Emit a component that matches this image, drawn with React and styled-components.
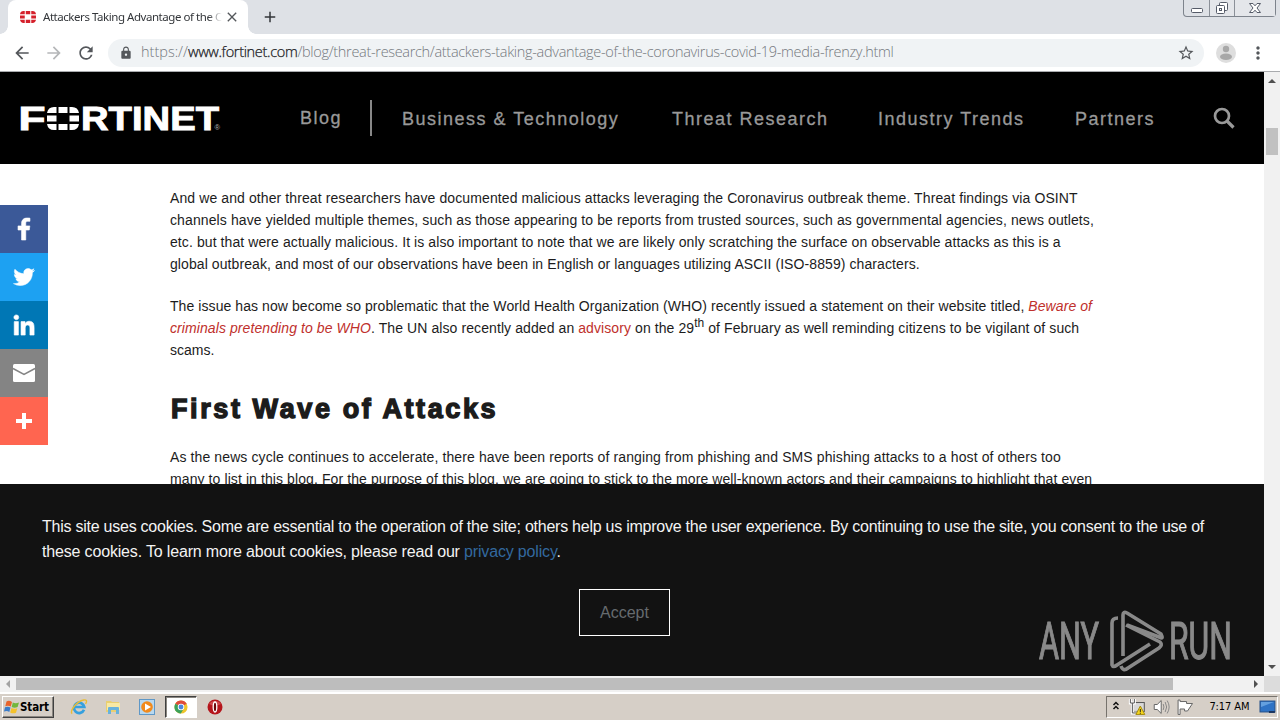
import styled, { createGlobalStyle } from "styled-components";
import { MdArrowBack, MdArrowForward, MdRefresh, MdClose, MdAdd, MdLock, MdStarBorder, MdMoreVert } from "react-icons/md";

const sans = `"Liberation Sans", Arial, sans-serif`;
const ui = `"DejaVu Sans Condensed", "DejaVu Sans", sans-serif`;

const GlobalStyle = createGlobalStyle`
  * { box-sizing: border-box; }
  body { margin: 0; overflow: hidden; background: #fff; }
`;

const Screen = styled.div`
  width: 1280px;
  height: 720px;
  display: flex;
  flex-direction: column;
  overflow: hidden;
  font-family: ${sans};
`;

const TabStrip = styled.div`
  height: 34px;
  flex: none;
  display: flex;
  align-items: flex-start;
  background: #dee1e6;
`;

const Tab = styled.div`
  position: relative;
  width: 240px;
  height: 34px;
  margin-left: 8px;
  padding: 0 8px 0 12px;
  display: flex;
  align-items: center;
  border-radius: 8px 8px 0 0;
  background: #fff;

  &::before, &::after {
    content: "";
    position: absolute;
    bottom: 0;
    width: 8px;
    height: 8px;
  }
  &::before {
    left: -8px;
    background: radial-gradient(circle at 0 0, #dee1e6 7.5px, #fff 8px);
  }
  &::after {
    right: -8px;
    background: radial-gradient(circle at 100% 0, #dee1e6 7.5px, #fff 8px);
  }
`;

const TabTitle = styled.div`
  width: 181px;
  margin-left: 7px;
  overflow: hidden;
  white-space: nowrap;
  font: 11.5px/16px "Noto Sans", sans-serif;
  letter-spacing: -0.45px;
  color: #33363a;
  mask-image: linear-gradient(90deg, #000 165px, transparent 179px);
`;

const NewTab = styled.div`
  margin: 8px 0 0 13px;
  height: 18px;
  color: #33363a;
`;

const WindowButtons = styled.div`
  display: flex;
  width: 93px;
  height: 17px;
  margin: 0 4px 0 auto;
  border: 1px solid #7d838c;
  border-top: 0;
  border-radius: 0 0 4px 4px;
`;

const WindowButton = styled.div`
  width: ${({ $width }) => $width}px;
  border-left: ${({ $first }) => ($first ? "0" : "1px solid #8b9098")};
  background: ${({ $first }) => ($first ? "transparent" : "#e4e6ea")};
  display: flex;
  justify-content: center;
`;

const Toolbar = styled.div`
  height: 38px;
  flex: none;
  display: flex;
  align-items: center;
  padding-left: 12px;
  background: #fff;
  border-bottom: 1px solid #a9abae;
  color: #54575b;
`;

const NavIcon = styled.div`
  width: 20px;
  height: 20px;
  margin-right: 12px;
  color: ${({ $muted }) => ($muted ? "#b5b7b9" : "#54575b")};
`;

const AddressBar = styled.div`
  width: 1096px;
  height: 28px;
  padding: 0 9px 0 11px;
  display: flex;
  align-items: center;
  border-radius: 14px;
  background: #f0f3f5;
`;

const Url = styled.div`
  flex: 1;
  margin-left: 8px;
  padding-bottom: 2px;
  white-space: nowrap;
  font: 300 14.5px/20px "Open Sans", "Noto Sans", sans-serif;
  letter-spacing: -0.32px;
  color: #74787d;

  b {
    font-weight: 300;
    color: #202124;
    -webkit-text-stroke: 0.25px #202124;
  }
`;

const Scheme = styled.span`
  letter-spacing: 0;
`;

const Avatar = styled.div`
  margin-left: 12px;
  height: 20px;
`;

const MenuButton = styled.div`
  margin-left: 12px;
  height: 20px;
`;

const Viewport = styled.div`
  flex: none;
  height: 604px;
  display: grid;
  grid-template-columns: 1264px 16px;
`;

const Page = styled.main`
  position: relative;
  height: 604px;
  overflow: hidden;
  background: #fff;
`;

const SiteHeader = styled.header`
  height: 92px;
  padding-left: 17px;
  display: flex;
  align-items: center;
  background: #000;
`;

const SiteNav = styled.nav`
  display: flex;
  align-items: center;
  margin-left: 75px;
  color: #999;
`;

const NavLink = styled.a`
  width: ${({ $width }) => $width}px;
  white-space: nowrap;
  font: 18px/24px ${sans};
  letter-spacing: 1.5px;
  -webkit-text-stroke: 0.3px #999;
  padding-top: ${({ $drop }) => $drop || 0}px;
`;

const NavRule = styled.div`
  width: 2px;
  height: 36px;
  margin-right: 30px;
  background: #888;
`;

const Article = styled.article`
  padding: 23px 0 0 170px;
  color: #1c1c1c;
`;

const Paragraph = styled.p`
  margin: 0 0 20px;
  font: 14px/22px ${sans};
`;

const Line = styled.span`
  display: block;
  height: 22px;
  white-space: nowrap;
  letter-spacing: ${({ $spacing }) => $spacing || 0}px;

  sup { font-size: 12px; line-height: 0; letter-spacing: 0; }
`;

const RedLink = styled.a`
  color: #c0302c;
  font-style: ${({ $italic }) => ($italic ? "italic" : "normal")};
`;

const Heading = styled.h2`
  margin: 31px 0 19px;
  padding-left: 1px;
  font: 700 27px/35px ${sans};
  letter-spacing: 2.6px;
  -webkit-text-stroke: 1.4px #1c1c1c;
`;

const ShareBar = styled.aside`
  position: absolute;
  left: 0;
  top: 133px;
`;

const ShareButton = styled.div`
  width: 48px;
  height: 48px;
  display: flex;
  align-items: center;
  justify-content: center;
  color: #fff;
  background: ${({ $color }) => $color};
`;

const CookieBanner = styled.section`
  position: absolute;
  left: 0;
  top: 412px;
  width: 1264px;
  height: 192px;
  padding: 30px 0 0 42px;
  background: #121212;
  color: #f4f4f4;
`;

const CookieLine = styled.div`
  height: 25px;
  font: 16px/25px ${sans};
  white-space: nowrap;
  letter-spacing: ${({ $spacing }) => $spacing || 0}px;

  a { color: #33699f; }
`;

const AcceptButton = styled.div`
  width: 91px;
  height: 47px;
  margin: 25px 0 0 537px;
  border: 1px solid #fff;
  text-align: center;
  color: #666b6f;
  font: 16px/45px ${sans};
`;

const Watermark = styled.div`
  position: absolute;
  left: 1038px;
  top: 536px;
  height: 66px;
`;

const VScroll = styled.div`
  display: flex;
  flex-direction: column;
  align-items: center;
  background: #f1f1f1;
`;

const VThumb = styled.div`
  width: 12px;
  height: 27px;
  margin: 40px 0 auto;
  background: #c1c1c1;
`;

const HScroll = styled.div`
  height: 16px;
  flex: none;
  display: flex;
  align-items: center;
  background: #f1f1f1;
`;

const HThumb = styled.div`
  width: 1157px;
  height: 12px;
  margin-right: auto;
  background: #bdbdbd;
`;

const ScrollCorner = styled.div`
  width: 16px;
  height: 16px;
  background: #dcdcdc;
`;

const Taskbar = styled.footer`
  flex: 1;
  display: flex;
  align-items: center;
  margin-top: 1px;
  padding: 0 2px;
  border-top: 1px solid #fff;
  background: #d6cfc7;
`;

const StartButton = styled.div`
  width: 52px;
  height: 22px;
  display: flex;
  align-items: center;
  padding-left: 1px;
  border: 1px solid;
  border-color: #fff #404040 #404040 #fff;
  box-shadow: inset -1px -1px #8a8680;
  font: 700 11.5px/20px ${ui};
  letter-spacing: -0.1px;
  color: #000;
`;

const TaskIcon = styled.div`
  width: 32px;
  height: 22px;
  margin-left: ${({ $gap }) => $gap || 0}px;
  display: flex;
  align-items: center;
  justify-content: center;
  border: 1px solid transparent;
  ${({ $active }) => $active && `
    background: #fff;
    border-color: #404040 #fff #fff #404040;
    box-shadow: inset 1px 1px #8a8680;
  `}
`;

const Tray = styled.div`
  width: 172px;
  height: 22px;
  margin-left: auto;
  display: flex;
  align-items: center;
  padding-left: 4px;
  border: 1px solid;
  border-color: #77736d #fff #fff #77736d;
`;

const Clock = styled.div`
  width: 51px;
  padding-left: 1px;
  white-space: nowrap;
  font: 11px/16px ${ui};
  letter-spacing: -0.1px;
  color: #000;
`;

const Arrow = ({ d, fill = "#505050" }) => (
  <svg width="16" height="16" viewBox="0 0 16 16"><path d={d} fill={fill} /></svg>
);

const RingMark = ({ width, height, color }) => (
  <svg width={width} height={height} viewBox="0 0 32 23" preserveAspectRatio="none" fill={color}>
    <path d="M0 6Q1 0 7 0H9.5V6ZM11.5 0H20.5V6H11.5ZM22.5 0H25Q31 0 32 6H22.5ZM0 8.5H9.5V14.5H0ZM22.5 8.5H32V14.5H22.5ZM0 17H9.5V23H7Q1 23 0 17ZM11.5 17H20.5V23H11.5ZM22.5 17H32Q31 23 25 23H22.5Z" />
  </svg>
);

const FortinetLogo = () => (
  <svg width="208" height="44" viewBox="-3 -8 208 44" fill="#fff" fontFamily="Liberation Sans, sans-serif" fontWeight="700">
    <g stroke="#fff" strokeWidth="0.9">
      <text x="-1.5" y="26" fontSize="32.5" textLength="27" lengthAdjust="spacingAndGlyphs">F</text>
      <text x="61" y="26" fontSize="32.5" textLength="138" lengthAdjust="spacingAndGlyphs">RTINET</text>
    </g>
    <g transform="translate(27 3)"><RingMark width={32} height={23} color="#fff" /></g>
    <text x="194.5" y="26" fontSize="7.5" fontWeight="400" fill="#bbb">®</text>
  </svg>
);

const SearchIcon = () => (
  <svg width="27" height="27" viewBox="0 0 27 27" fill="none" stroke="#999">
    <circle cx="11" cy="11" r="7" strokeWidth="2.7" />
    <path d="M16 16L22.5 22.5" strokeWidth="3.2" />
  </svg>
);

const AnyRunMark = () => (
  <svg width="204" height="66" viewBox="0 0 204 66" fill="none" opacity="0.5">
    <g fill="#fff" stroke="#fff" strokeWidth="1.1" fontFamily="Roboto, sans-serif" fontSize="51">
      <text x="1" y="51" textLength="60" lengthAdjust="spacingAndGlyphs">ANY</text>
      <text x="131" y="51" textLength="63" lengthAdjust="spacingAndGlyphs">RUN</text>
    </g>
    <g stroke="#fff" strokeWidth="3.6" strokeLinejoin="round">
      <path d="M80 10Q74 10 74 15V57Q75 60 79 57L112 36" />
      <path d="M85 48V7Q85 3 89 5L123 26Q126 32 121 29L89 17" />
      <path d="M88 17L122 34Q125 37 121 40L90 60Q85 64 83 58" />
    </g>
  </svg>
);

const WindowsFlag = () => (
  <svg width="16" height="16" viewBox="0 0 16 16">
    <path d="M2.5 2.5Q5 1 8 3L6.8 7.6Q4 6 1.3 7.3Z" fill="#e8642c" />
    <path d="M8.8 3.4Q11.5 5 15 3.4L13.6 8Q10.5 9.3 7.7 8Z" fill="#72b73b" />
    <path d="M1 8.2Q4 7 6.5 8.6L5.3 13Q3 11.4 0 12.6Z" fill="#3a7cc9" />
    <path d="M7.5 9Q10 10.4 13.3 9.2L12 13.7Q9 15 6.2 13.4Z" fill="#f4c22c" />
  </svg>
);

const ExplorerE = () => (
  <svg width="18" height="18" viewBox="0 0 18 18" fill="none">
    <path d="M14 11.8A5.2 5.2 0 1 1 14.3 9H5" stroke="#35a0de" strokeWidth="2.7" />
    <path d="M2.2 15.7C-1 14 6 3.5 13.7 2C17.5 1.3 16.8 4 15.6 6" stroke="#e9bc35" strokeWidth="1.4" />
  </svg>
);

const Folder = () => (
  <svg width="16" height="16" viewBox="0 0 16 16">
    <path d="M1 2H6L7 3H14V13H1Z" fill="#e9cf71" />
    <path d="M2 4H15V11H2Z" fill="#f8e9a4" />
    <path d="M3 15V9Q3 8 4 8H13Q14 8 14 9V15H11V11H6V15Z" fill="#68b2dc" />
  </svg>
);

const MediaPlayer = () => (
  <svg width="16" height="16" viewBox="0 0 16 16">
    <rect x=".5" y=".5" width="15" height="15" fill="#b8d8ef" stroke="#5f98c7" />
    <circle cx="8" cy="8" r="5.8" fill="#f18a1c" />
    <path d="M6 4.5L12 8L6 11.5Z" fill="#fff" />
  </svg>
);

const Chrome = () => (
  <svg width="14" height="14" viewBox="0 0 16 16">
    <circle cx="8" cy="8" r="7.5" fill="#efc52c" />
    <path d="M8 8L1.5 4.2A7.5 7.5 0 0 1 14.5 4.3Z" fill="#de4b3c" />
    <path d="M8 8L1.5 4.2A7.5 7.5 0 0 0 7.8 15.5L11 10Z" fill="#3ba15b" />
    <circle cx="8" cy="8" r="3.7" fill="#fff" />
    <circle cx="8" cy="8" r="2.8" fill="#4b86dd" />
  </svg>
);

const Opera = () => (
  <svg width="16" height="16" viewBox="0 0 16 16">
    <circle cx="8" cy="8" r="7.5" fill="#b5151b" />
    <path d="M2 5A7 6 0 0 1 14 5Q8 8 2 5Z" fill="#e06a6c" opacity=".6" />
    <ellipse cx="8" cy="8" rx="1.8" ry="5" fill="#6b0709" stroke="#fff" strokeWidth="1.3" />
  </svg>
);

const TrayIcons = () => (
  <svg width="98" height="18" viewBox="0 0 98 18" fill="none">
    <path d="M2.5 7L5 4.5L7.5 7M2.5 11L5 8.5L7.5 11" stroke="#111" strokeWidth="1.5" />
    <g stroke="#555">
      <rect x="22.5" y="4.5" width="11" height="9" fill="#d8d8d8" />
      <path d="M19.5 1V5H23.5V1M21.5 5V15H26" stroke="#fff" strokeWidth="3" />
      <path d="M19.5 1V5H23.5V1M21.5 5V15H26" />
      <path d="M25 16.5L29.5 8L34 16.5Z" fill="#f5d51c" stroke="#a48a12" />
      <path d="M29.5 11V14M29.5 14.8V15.8" stroke="#222" />
    </g>
    <g stroke="#666">
      <path d="M43.5 6.5H46.5L50.5 2.5V15.5L46.5 11.5H43.5Z" fill="#fff" />
      <path d="M52.5 6Q54 9 52.5 12M54.5 4Q57.5 9 54.5 14M56.5 2.5Q60.5 9 56.5 15.5" stroke="#888" />
      <path d="M67.5 2V16.5H69.5V11H74V13H77L82 5.5H76V3.5H69.5V2Z" fill="#fff" />
    </g>
  </svg>
);

const DesktopIcon = () => (
  <svg width="18" height="16" viewBox="0 0 18 16">
    <rect x="1" y="2" width="15" height="11" fill="#2f73c5" stroke="#255089" />
    <path d="M2 3H15L2 8Z" fill="#64a0df" />
    <path d="M10 12H16V14H10Z" fill="#1b355f" />
  </svg>
);

const Glyph = ({ size, d }) => (
  <svg width={size} height={size} viewBox="0 0 32 32" fill="#fff" stroke="#fff" strokeWidth="0.6"><path d={d} /></svg>
);

const shares = [
  {
    color: "#3b5998",
    icon: <Glyph size={32} d="M17.78 27V17.008h3.522l.527-4.09h-4.05v-2.61c0-1.182.33-1.99 2.023-1.99h2.166V5.16c-.375-.05-1.66-.16-3.155-.16-3.123 0-5.26 1.905-5.26 5.405v2.516h-3.53v4.09h3.53V27h4.223z" />,
  },
  {
    color: "#1da1f2",
    icon: <Glyph size={28} d="M28 8.557a9.913 9.913 0 0 1-2.828.775 4.93 4.93 0 0 0 2.166-2.725 9.738 9.738 0 0 1-3.13 1.194 4.92 4.92 0 0 0-3.593-1.55 4.924 4.924 0 0 0-4.794 6.049c-4.09-.21-7.72-2.17-10.15-5.15a4.942 4.942 0 0 0-.665 2.477c0 1.71.87 3.214 2.19 4.1a4.968 4.968 0 0 1-2.23-.616v.06c0 2.39 1.7 4.38 3.952 4.83-.414.115-.85.174-1.297.174-.318 0-.626-.03-.928-.086a4.935 4.935 0 0 0 4.6 3.42 9.893 9.893 0 0 1-6.114 2.107c-.398 0-.79-.023-1.175-.068a13.953 13.953 0 0 0 7.55 2.213c9.056 0 14.01-7.507 14.01-14.013 0-.213-.005-.426-.015-.637.96-.695 1.795-1.56 2.455-2.55z" />,
  },
  {
    color: "#0077b5",
    icon: <Glyph size={32} d="M6.227 12.61h4.19v13.48h-4.19V12.61zm2.095-6.7a2.43 2.43 0 0 1 0 4.86c-1.344 0-2.428-1.09-2.428-2.43s1.084-2.43 2.428-2.43m4.72 6.7h4.02v1.84h.058c.56-1.058 1.927-2.176 3.965-2.176 4.238 0 5.02 2.792 5.02 6.42v7.395h-4.183v-6.56c0-1.564-.03-3.574-2.178-3.574-2.18 0-2.514 1.7-2.514 3.46v6.668h-4.187V12.61z" />,
  },
  {
    color: "#848484",
    icon: (
      <svg width="24" height="20" viewBox="0 0 24 20">
        <rect x="1" y="1" width="22" height="18" rx="1.5" fill="#fff" />
        <path d="M1 5.5L12 11.5L23 5.5" fill="none" stroke="#848484" strokeWidth="1.5" />
      </svg>
    ),
  },
  {
    color: "#ff6550",
    icon: <svg width="16" height="16" viewBox="0 0 16 16"><path d="M6 0H10V6H16V10H10V16H6V10H0V6H6Z" fill="#fff" /></svg>,
  },
];

const App = () => (
  <Screen>
    <GlobalStyle />
    <TabStrip>
      <Tab>
        <RingMark width={16} height={12} color="#d5202b" />
        <TabTitle>Attackers Taking Advantage of the C</TabTitle>
        <MdClose size={16} color="#54575b" />
      </Tab>
      <NewTab><MdAdd size={18} /></NewTab>
      <WindowButtons>
        <WindowButton $width={25} $first>
          <svg width="14" height="16"><rect x="1.5" y="8.5" width="11" height="4" rx="1" fill="#fff" stroke="#555b68" /></svg>
        </WindowButton>
        <WindowButton $width={25}>
          <svg width="14" height="16" fill="#fff" stroke="#555b68">
            <rect x="4.5" y="2.5" width="8" height="8" rx="1" />
            <rect x="1.5" y="5.5" width="8" height="8" rx="1" />
            <rect x="4.5" y="8.5" width="2" height="2" />
          </svg>
        </WindowButton>
        <WindowButton $width={41}>
          <svg width="14" height="16"><path d="M1.5 3.5H5L7 5.8L9 3.5H12.5L9 8L12.5 12.5H9L7 10.2L5 12.5H1.5L5 8Z" fill="#fff" stroke="#555b68" /></svg>
        </WindowButton>
      </WindowButtons>
    </TabStrip>
    <Toolbar>
      <NavIcon><MdArrowBack size={20} /></NavIcon>
      <NavIcon $muted><MdArrowForward size={20} /></NavIcon>
      <NavIcon><MdRefresh size={20} /></NavIcon>
      <AddressBar>
        <MdLock size={14} />
        <Url><Scheme>https://</Scheme><b>www.fortinet.com</b>/blog/threat-research/attackers-taking-advantage-of-the-coronavirus-covid-19-media-frenzy.html</Url>
        <MdStarBorder size={18} />
      </AddressBar>
      <Avatar>
        <svg width="20" height="20" viewBox="0 0 20 20">
          <circle cx="10" cy="10" r="10" fill="#dedede" />
          <circle cx="10" cy="6" r="3.2" fill="#a8a8a8" />
          <ellipse cx="10" cy="13.8" rx="6" ry="3.2" fill="#a8a8a8" />
        </svg>
      </Avatar>
      <MenuButton><MdMoreVert size={20} /></MenuButton>
    </Toolbar>

    <Viewport>
      <Page>
        <SiteHeader>
          <FortinetLogo />
          <SiteNav>
            <NavLink $width={70}>Blog</NavLink>
            <NavRule />
            <NavLink $width={270} $drop={1}>Business &amp; Technology</NavLink>
            <NavLink $width={206} $drop={1}>Threat Research</NavLink>
            <NavLink $width={197} $drop={1}>Industry Trends</NavLink>
            <NavLink $width={136} $drop={1}>Partners</NavLink>
            <SearchIcon />
          </SiteNav>
        </SiteHeader>
        <Article>
          <Paragraph>
            <Line $spacing={0.1}>And we and other threat researchers have documented malicious attacks leveraging the Coronavirus outbreak theme. Threat findings via OSINT</Line>
            <Line $spacing={0.105}>channels have yielded multiple themes, such as those appearing to be reports from trusted sources, such as governmental agencies, news outlets,</Line>
            <Line $spacing={0.087}>etc. but that were actually malicious. It is also important to note that we are likely only scratching the surface on observable attacks as this is a</Line>
            <Line $spacing={0.088}>global outbreak, and most of our observations have been in English or languages utilizing ASCII (ISO-8859) characters.</Line>
          </Paragraph>
          <Paragraph>
            <Line $spacing={0.072}>The issue has now become so problematic that the World Health Organization (WHO) recently issued a statement on their website titled, <RedLink $italic>Beware of</RedLink></Line>
            <Line $spacing={0.087}><RedLink $italic>criminals pretending to be WHO</RedLink>. The UN also recently added an <RedLink>advisory</RedLink> on the 29<sup>th</sup> of February as well reminding citizens to be vigilant of such</Line>
            <Line>scams.</Line>
          </Paragraph>
          <Heading>First Wave of Attacks</Heading>
          <Paragraph>
            <Line $spacing={0.11}>As the news cycle continues to accelerate, there have been reports of ranging from phishing and SMS phishing attacks to a host of others too</Line>
            <Line $spacing={0.093}>many to list in this blog. For the purpose of this blog, we are going to stick to the more well-known actors and their campaigns to highlight that even</Line>
          </Paragraph>
        </Article>
        <ShareBar>
          {shares.map(({ color, icon }) => (
            <ShareButton key={color} $color={color}>{icon}</ShareButton>
          ))}
        </ShareBar>
        <CookieBanner>
          <CookieLine $spacing={-0.244}>This site uses cookies. Some are essential to the operation of the site; others help us improve the user experience. By continuing to use the site, you consent to the use of</CookieLine>
          <CookieLine $spacing={-0.165}>these cookies. To learn more about cookies, please read our <a>privacy policy</a>.</CookieLine>
          <AcceptButton>Accept</AcceptButton>
        </CookieBanner>
        <Watermark><AnyRunMark /></Watermark>
      </Page>
      <VScroll>
        <Arrow d="M4 11L8 7L12 11Z" />
        <VThumb />
        <Arrow d="M4 5L8 9L12 5Z" />
      </VScroll>
    </Viewport>
    <HScroll>
      <Arrow d="M10 4L6 8L10 12Z" fill="#a3a3a3" />
      <HThumb />
      <Arrow d="M6 4L10 8L6 12Z" />
      <ScrollCorner />
    </HScroll>
    <Taskbar>
      <StartButton><WindowsFlag />Start</StartButton>
      <TaskIcon $gap={9}><ExplorerE /></TaskIcon>
      <TaskIcon $gap={2}><Folder /></TaskIcon>
      <TaskIcon $gap={2}><MediaPlayer /></TaskIcon>
      <TaskIcon $gap={2} $active><Chrome /></TaskIcon>
      <TaskIcon $gap={2}><Opera /></TaskIcon>
      <Tray>
        <TrayIcons />
        <Clock>7:17 AM</Clock>
        <DesktopIcon />
      </Tray>
    </Taskbar>
  </Screen>
);

export default App;
